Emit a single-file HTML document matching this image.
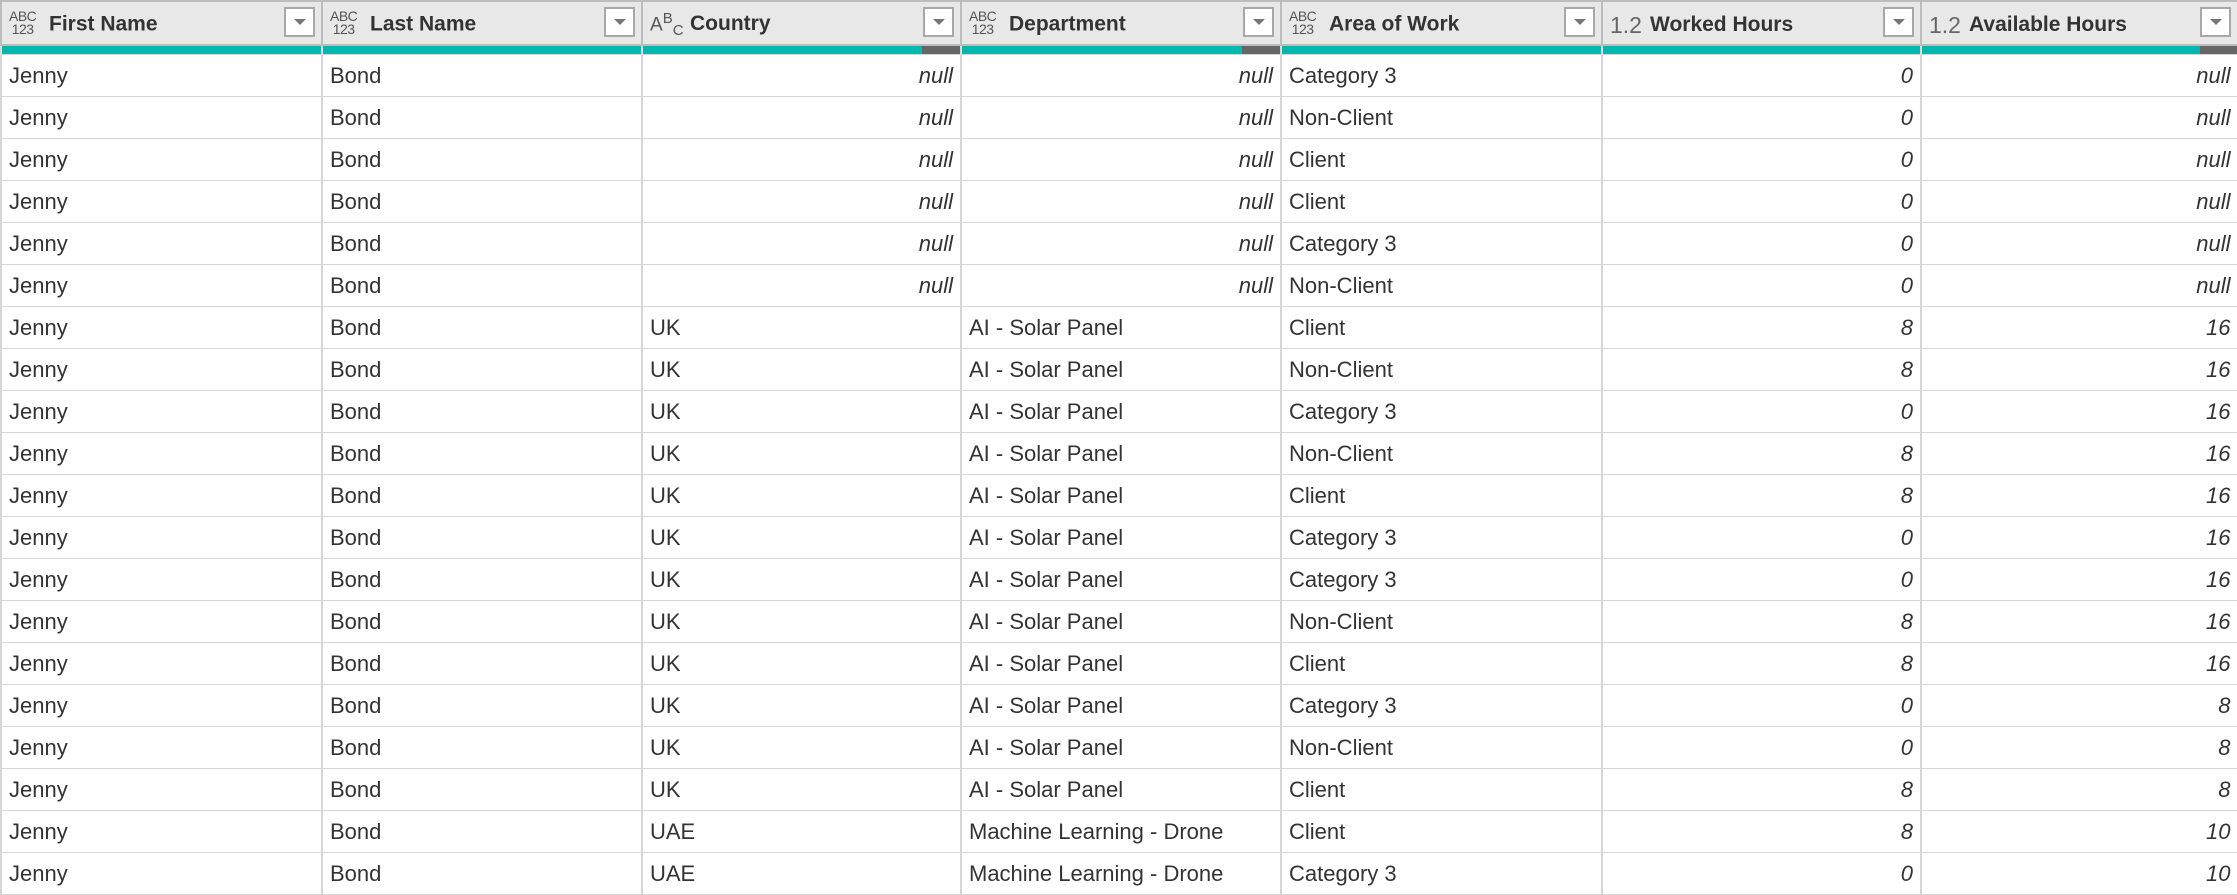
<!DOCTYPE html>
<html><head><meta charset="utf-8"><style>
body{margin:0;width:2237px;height:892px;overflow:hidden;background:#fff;font-family:"Liberation Sans",sans-serif;color:#333}
table{border-collapse:collapse;table-layout:fixed;width:2237px}
td,th{padding:0;overflow:hidden;white-space:nowrap}
th{height:44px;padding-top:4px;box-sizing:border-box;background:#e8e8e8;border:2px solid #bdbdbd;text-align:left;font-size:21px;position:relative;font-weight:bold;color:#333}
th .ic{display:inline-block;width:40px;margin-left:7px;color:#555;font-weight:normal;vertical-align:middle}
th .ab{font-size:14px;line-height:13px;display:inline-block;text-align:center;letter-spacing:-0.5px}
th .dd{position:absolute;right:6px;top:5px;width:27px;height:26px;background:#fff;border:2px solid #a8a8a8}
th .dd:after{content:"";position:absolute;left:8px;top:10px;border-left:6px solid transparent;border-right:6px solid transparent;border-top:6px solid #777}
td.q{height:8px;background:#01b8aa;border-left:2px solid #ddd;padding:0}
td.q.g{background:linear-gradient(to left,#666 38px,#01b8aa 38px)}
td{height:41px;border:1px solid #d6d6d6;border-left:2px solid #d6d6d6;font-size:22px;padding:0 7px}
td.r{text-align:right;font-style:italic}
</style></head><body>
<table>
<colgroup><col style="width:321px"><col style="width:320px"><col style="width:319px"><col style="width:320px"><col style="width:321px"><col style="width:319px"><col style="width:317px"></colgroup>
<tr>
<th><span class="ic"><span class="ab">ABC<br>123</span></span>First Name<span class="dd"></span></th>
<th><span class="ic"><span class="ab">ABC<br>123</span></span>Last Name<span class="dd"></span></th>
<th><span class="ic" style="font-size:19px">A<sup style="font-size:15px">B</sup><sub style="font-size:15px">C</sub></span>Country<span class="dd"></span></th>
<th><span class="ic"><span class="ab">ABC<br>123</span></span>Department<span class="dd"></span></th>
<th><span class="ic"><span class="ab">ABC<br>123</span></span>Area of Work<span class="dd"></span></th>
<th><span class="ic" style="font-size:23px;color:#666">1.2</span>Worked Hours<span class="dd"></span></th>
<th><span class="ic" style="font-size:23px;color:#666">1.2</span>Available Hours<span class="dd"></span></th>
</tr>
<tr><td class="q"></td><td class="q"></td><td class="q g"></td><td class="q g"></td><td class="q"></td><td class="q"></td><td class="q g"></td></tr>
<tr><td>Jenny</td><td>Bond</td><td class="r">null</td><td class="r">null</td><td>Category 3</td><td class="r">0</td><td class="r">null</td></tr>
<tr><td>Jenny</td><td>Bond</td><td class="r">null</td><td class="r">null</td><td>Non-Client</td><td class="r">0</td><td class="r">null</td></tr>
<tr><td>Jenny</td><td>Bond</td><td class="r">null</td><td class="r">null</td><td>Client</td><td class="r">0</td><td class="r">null</td></tr>
<tr><td>Jenny</td><td>Bond</td><td class="r">null</td><td class="r">null</td><td>Client</td><td class="r">0</td><td class="r">null</td></tr>
<tr><td>Jenny</td><td>Bond</td><td class="r">null</td><td class="r">null</td><td>Category 3</td><td class="r">0</td><td class="r">null</td></tr>
<tr><td>Jenny</td><td>Bond</td><td class="r">null</td><td class="r">null</td><td>Non-Client</td><td class="r">0</td><td class="r">null</td></tr>
<tr><td>Jenny</td><td>Bond</td><td>UK</td><td>AI - Solar Panel</td><td>Client</td><td class="r">8</td><td class="r">16</td></tr>
<tr><td>Jenny</td><td>Bond</td><td>UK</td><td>AI - Solar Panel</td><td>Non-Client</td><td class="r">8</td><td class="r">16</td></tr>
<tr><td>Jenny</td><td>Bond</td><td>UK</td><td>AI - Solar Panel</td><td>Category 3</td><td class="r">0</td><td class="r">16</td></tr>
<tr><td>Jenny</td><td>Bond</td><td>UK</td><td>AI - Solar Panel</td><td>Non-Client</td><td class="r">8</td><td class="r">16</td></tr>
<tr><td>Jenny</td><td>Bond</td><td>UK</td><td>AI - Solar Panel</td><td>Client</td><td class="r">8</td><td class="r">16</td></tr>
<tr><td>Jenny</td><td>Bond</td><td>UK</td><td>AI - Solar Panel</td><td>Category 3</td><td class="r">0</td><td class="r">16</td></tr>
<tr><td>Jenny</td><td>Bond</td><td>UK</td><td>AI - Solar Panel</td><td>Category 3</td><td class="r">0</td><td class="r">16</td></tr>
<tr><td>Jenny</td><td>Bond</td><td>UK</td><td>AI - Solar Panel</td><td>Non-Client</td><td class="r">8</td><td class="r">16</td></tr>
<tr><td>Jenny</td><td>Bond</td><td>UK</td><td>AI - Solar Panel</td><td>Client</td><td class="r">8</td><td class="r">16</td></tr>
<tr><td>Jenny</td><td>Bond</td><td>UK</td><td>AI - Solar Panel</td><td>Category 3</td><td class="r">0</td><td class="r">8</td></tr>
<tr><td>Jenny</td><td>Bond</td><td>UK</td><td>AI - Solar Panel</td><td>Non-Client</td><td class="r">0</td><td class="r">8</td></tr>
<tr><td>Jenny</td><td>Bond</td><td>UK</td><td>AI - Solar Panel</td><td>Client</td><td class="r">8</td><td class="r">8</td></tr>
<tr><td>Jenny</td><td>Bond</td><td>UAE</td><td>Machine Learning - Drone</td><td>Client</td><td class="r">8</td><td class="r">10</td></tr>
<tr><td>Jenny</td><td>Bond</td><td>UAE</td><td>Machine Learning - Drone</td><td>Category 3</td><td class="r">0</td><td class="r">10</td></tr>
</table>
</body></html>
